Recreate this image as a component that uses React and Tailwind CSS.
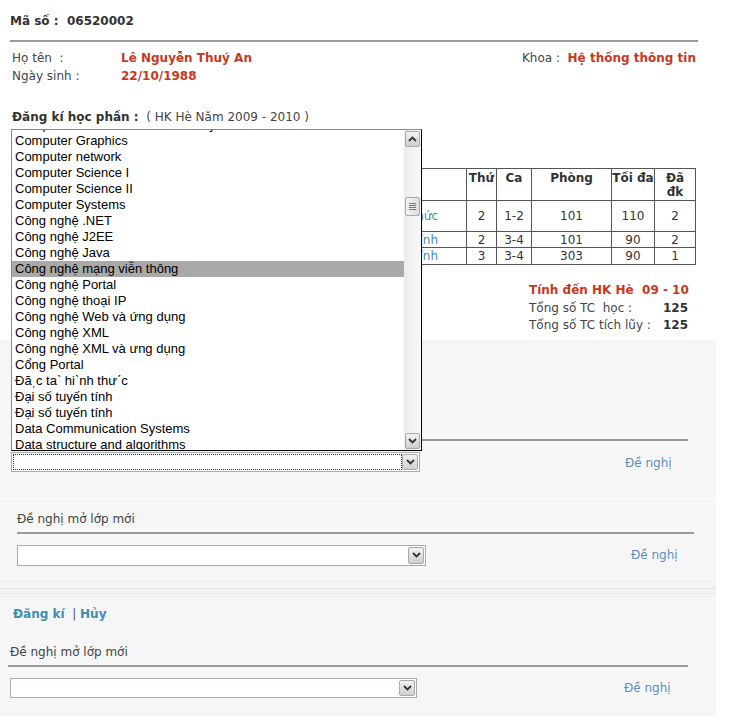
import React from 'react';

const items = [
  'Computer Architecture & Assembly',
  'Computer Graphics',
  'Computer network',
  'Computer Science I',
  'Computer Science II',
  'Computer Systems',
  'Công nghệ .NET',
  'Công nghệ J2EE',
  'Công nghệ Java',
  'Công nghệ mạng viễn thông',
  'Công nghệ Portal',
  'Công nghệ thoại IP',
  'Công nghệ Web và ứng dụng',
  'Công nghệ XML',
  'Công nghệ XML và ưng dụng',
  'Cổng Portal',
  'Đă\u02CCc ta\u02CB hi\u02CBnh thư\u02CAc',
  'Đại số tuyến tính',
  'Đại số tuyến tính',
  'Data Communication Systems',
  'Data structure and algorithms',
  'Digital Logic Design',
];

const rows = [
  { name: 'Đặc tả hình thức', thu: '2', ca: '1-2', phong: '101', max: '110', dk: '2', h: 'h-[31px]' },
  { name: 'Đại số tuyến tính', thu: '2', ca: '3-4', phong: '101', max: '90', dk: '2', h: 'h-[16px]' },
  { name: 'Đại số tuyến tính', thu: '3', ca: '3-4', phong: '303', max: '90', dk: '1', h: 'h-[17px]' },
];

const Chevron = ({ up }) => (
  <svg width="9" height="6" viewBox="0 0 9 6">
    <path
      d={up ? 'M1 5 L4.5 1.5 L8 5' : 'M1 1 L4.5 4.5 L8 1'}
      fill="none"
      stroke="#333"
      strokeWidth="1.8"
    />
  </svg>
);

const ArrowBtn = ({ up, className = '' }) => (
  <div
    className={`flex w-[16px] items-center justify-center rounded-[2px] border border-[#a9a9a9] bg-gradient-to-b from-[#f2f2f2] to-[#cfcfcf] ${className}`}
  >
    <Chevron up={up} />
  </div>
);

const Select = ({ className = '', focus }) => (
  <div className={`flex h-[20px] border border-[#a5acb2] bg-white p-px ${className}`}>
    <div className={focus ? 'flex-1 border border-dotted border-[#333]' : 'flex-1'} />
    <ArrowBtn />
  </div>
);

// open dropdown list, drawn above its select
const ListBox = () => (
  <div className="absolute bottom-full left-0 mb-[1px] flex h-[322px] w-[411px] border border-[#888] border-r-black border-b-black bg-white font-['Liberation_Sans',Arial,sans-serif] text-[13px] text-black">
    <div className="flex-1 overflow-hidden">
      <div className="-mt-[13px]">
        {items.map((t, i) => (
          <div
            key={i}
            className={`h-[16px] pl-[3px] leading-[16px] whitespace-nowrap ${i === 9 ? 'bg-[#a9a9a9]' : ''}`}
          >
            {t}
          </div>
        ))}
      </div>
    </div>
    <div className="flex w-[17px] flex-col bg-gradient-to-r from-[#ececec] to-[#f8f8f8] p-px">
      <ArrowBtn up className="h-[16px] w-full" />
      <div className="relative flex-1">
        <div className="absolute left-0 top-[50px] flex h-[19px] w-full flex-col items-center justify-center gap-[1px] rounded-[2px] border border-[#a9a9a9] bg-gradient-to-r from-[#f4f4f4] to-[#dcdcdc]">
          <div className="h-px w-[7px] bg-[#777]" />
          <div className="h-px w-[7px] bg-[#777]" />
          <div className="h-px w-[7px] bg-[#777]" />
          <div className="h-px w-[7px] bg-[#777]" />
        </div>
      </div>
      <ArrowBtn className="h-[16px] w-full" />
    </div>
  </div>
);

const Link = ({ children, className = '' }) => (
  <span className={`text-[#5b8fbd] ${className}`}>{children}</span>
);

export default function App() {
  return (
    <div className="min-h-[724px] w-[730px] bg-white font-['DejaVu_Sans',Verdana,sans-serif] text-[12px] text-[#333]">
      {/* header */}
      <div className="pl-[10px] pt-[13px]">
        <div className="font-bold leading-4 text-[#333]">Mã số :&nbsp; 06520002</div>
        <div className="mt-[11px] w-[688px] border-t-2 border-[#9a9a9a]" />
        <div className="mt-[7px] flex w-[686px] justify-between pl-[2px] leading-[18px]">
          <div className="grid grid-cols-[109px_auto]">
            <span className="text-[#444]">Họ tên&nbsp; :</span>
            <span className="font-bold text-[#c4391d]">Lê Nguyễn Thuý An</span>
            <span className="text-[#444]">Ngày sinh :</span>
            <span className="font-bold text-[#c4391d]">22/10/1988</span>
          </div>
          <div>
            <span className="text-[#444]">Khoa :&nbsp; </span>
            <span className="font-bold text-[#c4391d]">Hệ thống thông tin</span>
          </div>
        </div>
        <div className="mt-[23px] pl-[2px] leading-[18px]">
          <span className="font-bold">Đăng kí học phần :</span>
          <span className="text-[#444]">&nbsp; ( HK Hè Năm 2009 - 2010 )</span>
        </div>
      </div>

      {/* table */}
      <div className="mt-[42px] flex justify-end pr-[34px]">
        <table className="border-collapse border border-[#555] text-center">
          <thead>
            <tr className="h-[32px] align-top font-bold leading-[14px]">
              <th className="w-[160px] border border-[#555]" />
              <th className="w-[30px] border border-[#555] pt-[2px]">Thứ</th>
              <th className="w-[35px] border border-[#555] pt-[2px]">Ca</th>
              <th className="w-[80px] border border-[#555] pt-[2px]">Phòng</th>
              <th className="w-[43px] border border-[#555] pt-[2px]">Tối đa</th>
              <th className="w-[41px] border border-[#555] pt-[2px]">
                Đã
                <br />
                đk
              </th>
            </tr>
          </thead>
          <tbody className="leading-[14px]">
            {rows.map((r, i) => (
              <tr key={i} className={r.h}>
                <td className="border border-[#555] pr-[28px] text-right text-[#3a8fb7] whitespace-nowrap">{r.name}</td>
                <td className="border border-[#555]">{r.thu}</td>
                <td className="border border-[#555]">{r.ca}</td>
                <td className="border border-[#555]">{r.phong}</td>
                <td className="border border-[#555]">{r.max}</td>
                <td className="border border-[#555]">{r.dk}</td>
              </tr>
            ))}
          </tbody>
        </table>
      </div>

      {/* summary */}
      <div className="mt-[17px] flex pl-[529px]">
        <div className="w-[159px] whitespace-nowrap leading-[17.5px]">
          <div className="font-bold text-[#c4391d]">Tính đến HK Hè&nbsp; 09 - 10</div>
          <div className="flex justify-between">
            <span className="text-[#444]">Tổng số TC&nbsp; học :</span>
            <span className="font-bold">125</span>
          </div>
          <div className="flex justify-between">
            <span className="text-[#444]">Tổng số TC tích lũy :</span>
            <span className="font-bold">125</span>
          </div>
        </div>
      </div>

      {/* panel 1 */}
      <div className="mt-[5px] w-[716px] bg-[#f6f6f6] pb-[26px] pl-[11px] pt-[99px]">
        <div className="w-[677px] border-t-2 border-[#9a9a9a]" />
        <div className="mt-[11px] flex items-center">
          <div className="relative">
            <ListBox />
            <Select focus className="w-[409px]" />
          </div>
          <Link className="ml-[205px] translate-y-[1px]">Đề nghị</Link>
        </div>
      </div>

      {/* panel 2 */}
      <div className="w-[716px] border-t-2 border-[#fbfbfb] bg-[#f6f6f6] pb-[13px] pl-[17px] pt-[10px]">
        <div className="leading-[18px] text-[#444]">Đề nghị mở lớp mới</div>
        <div className="mt-[4px] w-[677px] border-t-2 border-[#9a9a9a]" />
        <div className="mt-[11px] flex items-center">
          <Select className="h-[21px] w-[409px]" />
          <Link className="ml-[205px]">Đề nghị</Link>
        </div>
      </div>

      {/* seam */}
      <div className="h-[19px] w-[716px] border-t border-white bg-[#f3f3f3]">
        <div className="mt-[8px] border-t border-[#e6e6e6]" />
        <div className="mt-[4px] border-t border-[#e9e9e9]" />
      </div>

      {/* panel 3 */}
      <div className="h-[118px] w-[716px] bg-[#f6f6f6] pl-[8px] pt-[7px]">
        <div className="pl-[5px] font-bold leading-[18px]">
          <span className="text-[#3a8fb1]">Đăng kí</span>
          <span className="font-normal text-[#555]"> &nbsp;| </span>
          <span className="text-[#3a8fb1]">Hủy</span>
        </div>
        <div className="mt-[20px] pl-[2px] leading-[18px] text-[#444]">Đề nghị mở lớp mới</div>
        <div className="mt-[4px] w-[680px] border-t-2 border-[#9a9a9a]" />
        <div className="mt-[11px] flex items-center pl-[2px]">
          <Select className="w-[407px]" />
          <Link className="ml-[207px]">Đề nghị</Link>
        </div>
      </div>
    </div>
  );
}
